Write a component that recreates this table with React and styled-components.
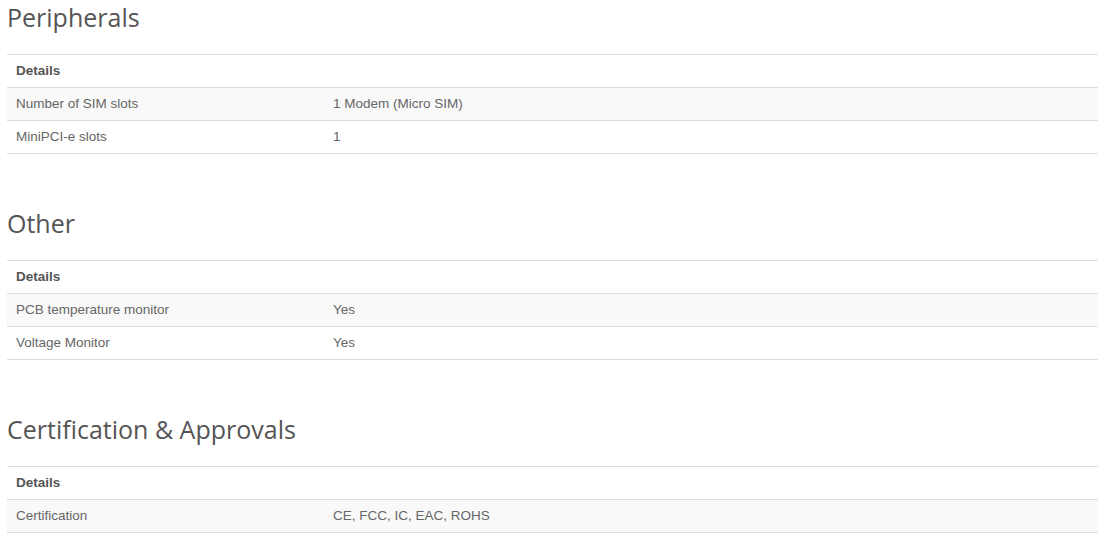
import React from 'react';
import styled, { createGlobalStyle } from 'styled-components';

const GlobalStyle = createGlobalStyle`
  body {
    margin: 0;
    background: #fff;
    font-family: "Liberation Sans", Arial, sans-serif;
  }
`;

const Page = styled.div`
  display: flex;
  flex-direction: column;
  gap: 55px;
  padding: 3px 10px 0 7px;
`;

const Section = styled.section`
  display: flex;
  flex-direction: column;
`;

const Heading = styled.h3`
  margin: 0 0 23px;
  font-family: "Open Sans", sans-serif;
  font-weight: 400;
  font-size: 25px;
  line-height: 28px;
  color: #555;
`;

const Table = styled.table`
  width: 100%;
  border-collapse: collapse;
  font-size: 13.5px;
  color: #666;
`;

const Row = styled.tr`
  background: ${(p) => (p.$striped ? '#f9f9f9' : '#fff')};
`;

const Cell = styled.td`
  padding: 7px 9px 8px;
  line-height: 17px;
  border-top: 1px solid #ddd;
  border-bottom: 1px solid #ddd;
  vertical-align: middle;
  font-weight: ${(p) => (p.$head ? 700 : 400)};
  color: ${(p) => (p.$head ? '#555' : '#666')};
  width: ${(p) => p.$width || 'auto'};
`;

const sections = [
  {
    title: 'Peripherals',
    rows: [
      ['Number of SIM slots', '1 Modem (Micro SIM)'],
      ['MiniPCI-e slots', '1'],
    ],
  },
  {
    title: 'Other',
    rows: [
      ['PCB temperature monitor', 'Yes'],
      ['Voltage Monitor', 'Yes'],
    ],
  },
  {
    title: 'Certification & Approvals',
    rows: [['Certification', 'CE, FCC, IC, EAC, ROHS']],
  },
];

const App = () => (
  <>
    <GlobalStyle />
    <Page>
      {sections.map((s) => (
        <Section key={s.title}>
          <Heading>{s.title}</Heading>
          <Table>
            <tbody>
              <Row>
                <Cell $head colSpan={2}>Details</Cell>
              </Row>
              {s.rows.map(([label, value], i) => (
                <Row key={label} $striped={i % 2 === 0}>
                  <Cell $width="299px">{label}</Cell>
                  <Cell>{value}</Cell>
                </Row>
              ))}
            </tbody>
          </Table>
        </Section>
      ))}
    </Page>
  </>
);

export default App;
